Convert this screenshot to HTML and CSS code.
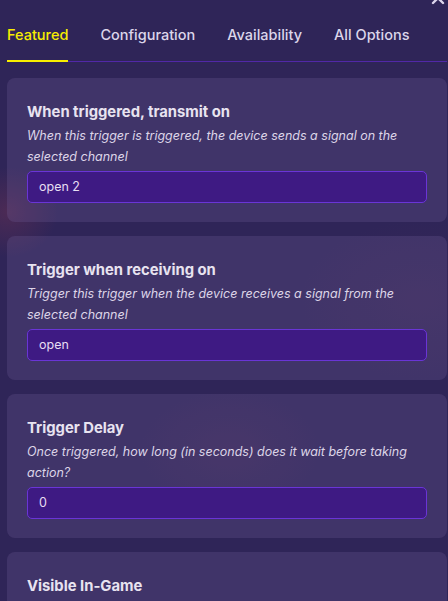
FILE: index.html
```html
<!DOCTYPE html>
<html lang="en">
<head>
<meta charset="utf-8">
<title>Trigger options</title>
<link rel="stylesheet" href="styles.css">
</head>
<body>
<div class="panel">
  <svg class="close" viewBox="0 0 14 14" width="14" height="14" aria-hidden="true">
    <path d="M2 2 L12 12 M12 2 L2 12" stroke="#ddd6ec" stroke-width="2.4" stroke-linecap="round"/>
  </svg>
  <nav class="tabs">
    <div class="tab active">Featured</div>
    <div class="tab">Configuration</div>
    <div class="tab">Availability</div>
    <div class="tab">All Options</div>
  </nav>
  <div class="list">
    <section class="card">
      <h2 class="title">When triggered, transmit on</h2>
      <p class="desc">When this trigger is triggered, the device sends a signal on the selected channel</p>
      <div class="field">open 2</div>
    </section>
    <section class="card">
      <h2 class="title">Trigger when receiving on</h2>
      <p class="desc">Trigger this trigger when the device receives a signal from the selected channel</p>
      <div class="field">open</div>
    </section>
    <section class="card">
      <h2 class="title">Trigger Delay</h2>
      <p class="desc">Once triggered, how long (in seconds) does it wait before taking action?</p>
      <div class="field">0</div>
    </section>
    <section class="card last">
      <h2 class="title">Visible In-Game</h2>
      <p class="desc">Is this device visible in-game?</p>
    </section>
  </div>
</div>
</body>
</html>
```
FILE: styles.css
```css
html, body {
  margin: 0;
  padding: 0;
}
body {
  background-color: #2f2558;
  background-image:
    radial-gradient(ellipse 50px 45px at 8px 212px, rgba(120, 50, 80, 0.4), transparent),
    radial-gradient(ellipse 90px 60px at 230px 450px, rgba(90, 50, 90, 0.22), transparent),
    radial-gradient(ellipse 120px 80px at 420px 300px, rgba(90, 50, 90, 0.18), transparent);
  font-family: Inter, "Noto Sans", "Liberation Sans", sans-serif;
  color: #e6e0ef;
  height: 601px;
  overflow: hidden;
}
.panel {
  position: relative;
  padding: 0 1px 0 7px;
}
.close {
  position: absolute;
  top: -9px;
  right: 3px;
}
.tabs {
  display: flex;
  gap: 32px;
  border-bottom: 1px solid #5128a8;
}
.tab {
  padding: 24px 0 14px;
  line-height: 22px;
  font-size: 14.5px;
  font-weight: 500;
  color: #dcd6ea;
  border-bottom: 2px solid transparent;
  margin-bottom: -1px;
}
.tab.active {
  color: #f7ee00;
  border-bottom-color: #f7ee00;
}
.list {
  display: flex;
  flex-direction: column;
  gap: 14px;
  margin-top: 16px;
}
.card {
  background: rgba(110, 95, 150, 0.28);
  border-radius: 8px;
  padding: 24px 20px 19px;
}
.title {
  margin: 0;
  font-size: 14.8px;
  font-weight: 700;
  line-height: 20px;
  color: #e8e3f0;
}
.desc {
  margin: 3px 0 4px;
  font-size: 12.5px;
  font-style: italic;
  line-height: 21px;
  color: #ddd5e8;
}
.field {
  height: 30px;
  border: 1px solid #6a35d6;
  border-radius: 5px;
  background: #3e1a83;
  padding: 0 11px;
  line-height: 30px;
  font-size: 12.5px;
  color: #e6def2;
}
```
